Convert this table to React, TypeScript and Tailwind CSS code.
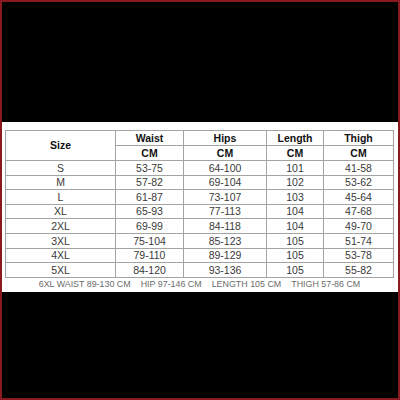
const rows = [
	['S', '53-75', '64-100', '101', '41-58'],
	['M', '57-82', '69-104', '102', '53-62'],
	['L', '61-87', '73-107', '103', '45-64'],
	['XL', '65-93', '77-113', '104', '47-68'],
	['2XL', '69-99', '84-118', '104', '49-70'],
	['3XL', '75-104', '85-123', '105', '51-74'],
	['4XL', '79-110', '89-129', '105', '53-78'],
	['5XL', '84-120', '93-136', '105', '55-82'],
]

const cell = 'border border-[#a3a3a3] p-0 text-center align-middle'

export default function App() {
	return (
		<div className="flex h-[400px] w-[400px] flex-col border-2 border-[#8b1a20] bg-black">
			<div className="h-[120px] shrink-0 bg-black" />
			<div className="flex h-[170px] shrink-0 flex-col bg-white pl-[3px] pr-[4px] pt-[8px]">
				<table className="w-[388px] table-fixed border-collapse font-['Liberation_Sans',Arial,sans-serif] text-[10.5px] leading-none">
					<colgroup>
						<col className="w-[110px]" />
						<col className="w-[68px]" />
						<col className="w-[83px]" />
						<col className="w-[57px]" />
						<col className="w-[70px]" />
					</colgroup>
					<thead>
						<tr className="h-[15px] font-bold text-[#111]">
							<th rowSpan={2} className={cell}>
								Size
							</th>
							<th className={cell}>Waist</th>
							<th className={cell}>Hips</th>
							<th className={cell}>Length</th>
							<th className={cell}>Thigh</th>
						</tr>
						<tr className="h-[15px] font-bold text-[#111]">
							<th className={cell}>CM</th>
							<th className={cell}>CM</th>
							<th className={cell}>CM</th>
							<th className={cell}>CM</th>
						</tr>
					</thead>
					<tbody>
						{rows.map((r) => (
							<tr key={r[0]} className="h-[14.6px] text-[#3a3a3a]">
								{r.map((v, i) => (
									<td key={i} className={cell}>
										{v}
									</td>
								))}
							</tr>
						))}
					</tbody>
				</table>
				<div className="flex flex-1 items-center justify-center gap-[10px] font-['Liberation_Sans',Arial,sans-serif] text-[8.9px] leading-none text-[#6b6b6b]">
					<span>6XL WAIST 89-130 CM</span>
					<span>HIP 97-146 CM</span>
					<span>LENGTH 105 CM</span>
					<span>THIGH 57-86 CM</span>
				</div>
			</div>
			<div className="flex-1 bg-black" />
		</div>
	)
}
